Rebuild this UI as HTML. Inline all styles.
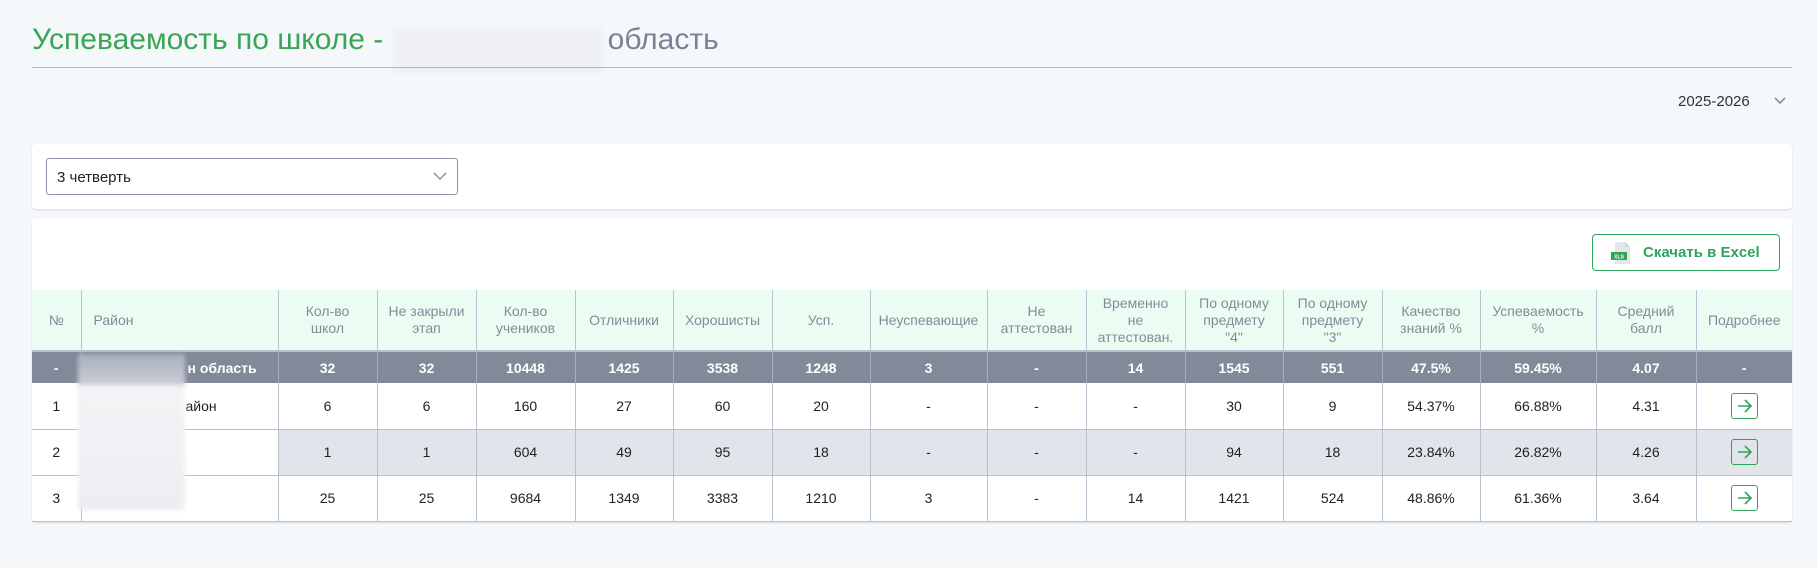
<!DOCTYPE html>
<html><head><meta charset="utf-8"><style>
*{box-sizing:border-box;margin:0;padding:0}
body{width:1817px;height:568px;background:#f5f8fb;font-family:"Liberation Sans",sans-serif;position:relative;overflow:hidden;color:#222}
.title{position:absolute;left:32px;top:23px;font-size:30px;color:#3aa655;white-space:nowrap}
.title .g{color:#7b8197}
.uline{position:absolute;left:32px;top:67px;width:1760px;height:1px;background:#b3b8c6}
.blur{position:absolute;background:#eef0f4;filter:blur(2px)}
.year{position:absolute;left:1678px;top:93px;font-size:15px;color:#333}
.card{position:absolute;background:#fff;border-radius:4px;box-shadow:0 1px 2px rgba(150,170,190,.35)}
.sel{position:absolute;left:46px;top:158px;width:412px;height:37px;border:1px solid #8a93a6;border-radius:3px;font-size:15px;padding:10px 10px;color:#222}
.btn{position:absolute;left:1592px;top:234px;width:188px;height:37px;border:1.5px solid #2ea65a;border-radius:4px;color:#2ea65a;font-size:15px;font-weight:bold;padding:9px 0 0 50px}
table{position:absolute;left:32px;top:290px;border-collapse:collapse;table-layout:fixed;width:1760px;font-size:14px}
td,th{border-left:1px solid #b9bfcc;text-align:center;overflow:hidden;white-space:nowrap}
th{background:#ebfdf3;color:#858a98;font-weight:normal;height:61px;line-height:17px;white-space:normal;border-bottom:2px solid #b9bfcc}
tr td:first-child,tr th:first-child{border-left:none}
tr.tot td{background:#828a9a;color:#fff;font-weight:bold;height:32px;border-color:#a9afbd}
tr.r td{height:46px;border-bottom:1px solid #b9bfcc;color:#222}
tr.g td.d{background:#e1e4eb}
.ar{display:inline-block;width:27px;height:26px;border:1.3px solid #2ea65a;border-radius:3px;vertical-align:middle}
</style></head><body>
<div class="title">Успеваемость по школе - <span style="display:inline-block;width:216px"></span><span class="g">область</span></div>
<div class="blur" style="left:392px;top:29px;width:211px;height:44px"></div>
<div class="uline"></div>
<div class="year">2025-2026 <svg style="position:absolute;left:96px;top:4px" width="12" height="8" viewBox="0 0 12 8"><path d="M1 1l5 5 5-5" fill="none" stroke="#8a8f9c" stroke-width="1.6"/></svg></div>
<div class="card" style="left:32px;top:144px;width:1760px;height:65px"></div>
<div class="sel">3 четверть<svg style="position:absolute;right:10px;top:13px" width="14" height="9" viewBox="0 0 14 9"><path d="M1 1l6 6 6-6" fill="none" stroke="#8a93a6" stroke-width="1.5"/></svg></div>
<div class="card" style="left:32px;top:218px;width:1760px;height:304px"></div>
<div class="btn"><svg style="position:absolute;left:18px;top:6px" width="22" height="24" viewBox="0 0 22 24"><path d="M4 1h10l5 5v17H4z" fill="#e4e6ea"/><path d="M14 1v5h5" fill="#cfd2d8"/><rect x="0" y="11" width="16" height="8" fill="#2ea65a"/><text x="8" y="17.5" font-size="5" fill="#fff" text-anchor="middle" font-family="Liberation Sans">XLS</text></svg>Скачать в Excel</div>
<table>
<colgroup><col style="width:49px"><col style="width:197px"><col style="width:99px"><col style="width:99px"><col style="width:99px"><col style="width:98px"><col style="width:99px"><col style="width:98px"><col style="width:117px"><col style="width:99px"><col style="width:99px"><col style="width:98px"><col style="width:99px"><col style="width:98px"><col style="width:116px"><col style="width:100px"><col style="width:96px"></colgroup>
<tr><th>№</th><th style="text-align:left;padding-left:12px">Район</th><th>Кол-во<br>школ</th><th>Не закрыли<br>этап</th><th>Кол-во<br>учеников</th><th>Отличники</th><th>Хорошисты</th><th>Усп.</th><th>Неуспевающие</th><th>Не<br>аттестован</th><th>Временно<br>не<br>аттестован.</th><th>По одному<br>предмету<br>"4"</th><th>По одному<br>предмету<br>"3"</th><th>Качество<br>знаний %</th><th>Успеваемость<br>%</th><th>Средний<br>балл</th><th>Подробнее</th></tr>
<tr class="tot"><td>-</td><td style="text-align:left;padding-left:106px">н область</td><td>32</td><td>32</td><td>10448</td><td>1425</td><td>3538</td><td>1248</td><td>3</td><td>-</td><td>14</td><td>1545</td><td>551</td><td>47.5%</td><td>59.45%</td><td>4.07</td><td>-</td></tr>
<tr class="r"><td>1</td><td style="text-align:left;padding-left:104px">айон</td><td>6</td><td>6</td><td>160</td><td>27</td><td>60</td><td>20</td><td>-</td><td>-</td><td>-</td><td>30</td><td>9</td><td>54.37%</td><td>66.88%</td><td>4.31</td><td><span class="ar"><svg width="25" height="24" viewBox="0 0 25 24"><path d="M6 12h13M13 6l6 6-6 6" fill="none" stroke="#2ea65a" stroke-width="1.6"/></svg></span></td></tr>
<tr class="r g"><td>2</td><td></td><td class="d">1</td><td class="d">1</td><td class="d">604</td><td class="d">49</td><td class="d">95</td><td class="d">18</td><td class="d">-</td><td class="d">-</td><td class="d">-</td><td class="d">94</td><td class="d">18</td><td class="d">23.84%</td><td class="d">26.82%</td><td class="d">4.26</td><td class="d"><span class="ar"><svg width="25" height="24" viewBox="0 0 25 24"><path d="M6 12h13M13 6l6 6-6 6" fill="none" stroke="#2ea65a" stroke-width="1.6"/></svg></span></td></tr>
<tr class="r"><td>3</td><td></td><td>25</td><td>25</td><td>9684</td><td>1349</td><td>3383</td><td>1210</td><td>3</td><td>-</td><td>14</td><td>1421</td><td>524</td><td>48.86%</td><td>61.36%</td><td>3.64</td><td><span class="ar"><svg width="25" height="24" viewBox="0 0 25 24"><path d="M6 12h13M13 6l6 6-6 6" fill="none" stroke="#2ea65a" stroke-width="1.6"/></svg></span></td></tr>
</table>
<div class="blur" style="left:78px;top:354px;width:107px;height:156px;background:linear-gradient(#a8aebb 0,#c9cdd6 30px,#f3f4f6 32px,#eceef2 100%)"></div>
</body></html>
